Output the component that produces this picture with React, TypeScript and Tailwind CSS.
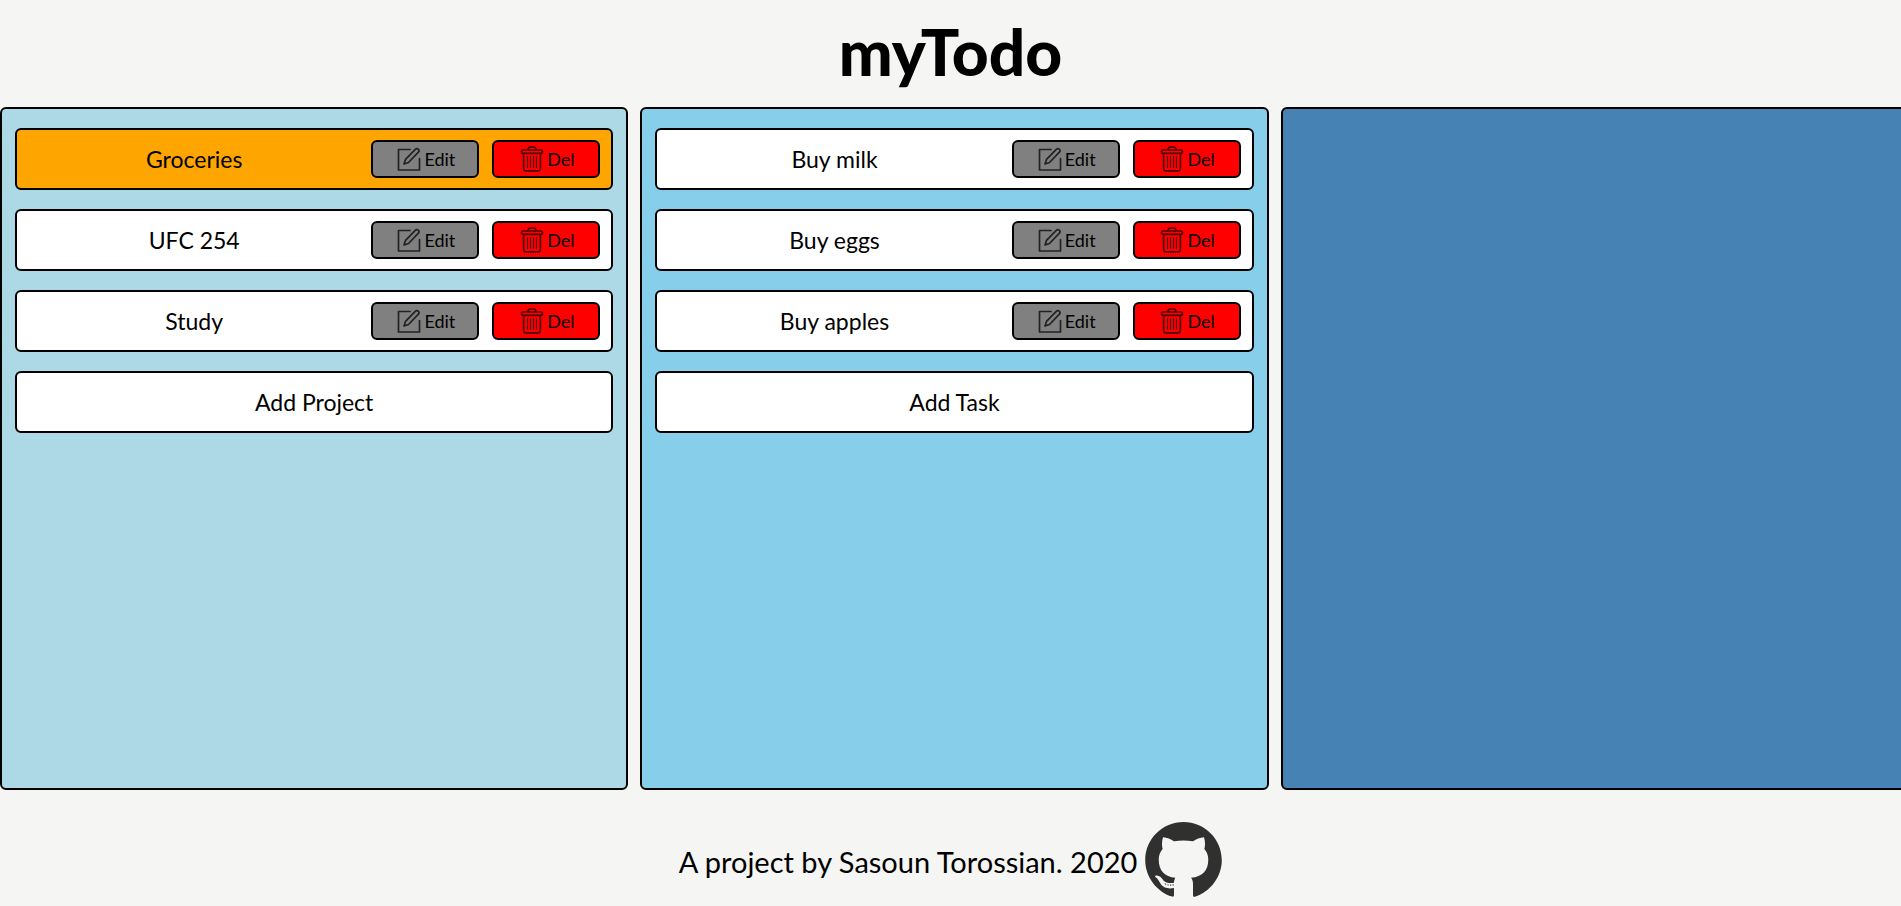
import React, { useState } from "react";

type Item = { id: number; name: string };

const projects: Item[] = [
  { id: 1, name: "Groceries" },
  { id: 2, name: "UFC 254" },
  { id: 3, name: "Study" },
];

const tasks: Item[] = [
  { id: 1, name: "Buy milk" },
  { id: 2, name: "Buy eggs" },
  { id: 3, name: "Buy apples" },
];

function EditIcon() {
  return (
    <svg
      viewBox="0 0 24 24"
      className="size-6 shrink-0"
      fill="none"
      stroke="#222222"
      strokeWidth="1.7"
      strokeLinejoin="round"
      strokeLinecap="round"
      aria-hidden="true"
    >
      <path d="M13 2.5H1.5V23h21V11.5" />
      <path d="M7 17l1.500-4.600L18.300 2.300c.9-.9 2.300-.9 3.100 0 .8.8.8 2 0 2.900L11.500 15.500z" />
    </svg>
  );
}

function TrashIcon() {
  return (
    <svg
      viewBox="0 0 24 26"
      className="h-[26px] w-6 shrink-0"
      fill="none"
      stroke="#4a0000"
      strokeWidth="1.6"
      strokeLinejoin="round"
      strokeLinecap="round"
      aria-hidden="true"
    >
      <rect x="1.5" y="4" width="21" height="3.4" rx="1.7" />
      <path d="M8 4c0-2 1-3 2.4-3h3.200C15 1 16 2 16 4" />
      <path d="M3.600 7.600v14.600c0 1.700 1 2.700 2.700 2.700h11.400c1.700 0 2.700-1 2.700-2.700V7.600" />
      <path d="M7.500 10.500v11M10.500 10.500v11M13.500 10.500v11M16.500 10.500v11" strokeWidth="1.200" />
    </svg>
  );
}

function GithubMark() {
  return (
    <svg viewBox="0 0 98 96" className="h-[75px] w-[77px]" aria-hidden="true">
      <path
        fill="#303030"
        d="M49 0C22 0 0 21.800 0 48.800 0 70 14.500 89 34.500 95.500c1.500.4 2.300-.2 2.300-1.700V84.500c-7 1.200-13.100.2-16.300-4.100-3-4.600-4-8-7.100-9.700-1.300-.8-.8-2.500 1-2.300 5.600.3 7.200 4.500 10 7.400 3.200 2.600 8 2.600 12.400 2 .1-2.500.6-4.300 1.700-6.400C25 70 17.300 62.500 17.300 48c0-5.500 1.800-9.800 5-13.500-1.300-4.300-1.100-10.300.5-15 5.200.2 9.700 2.300 14 5.200 8-1.300 16.400-1.300 24.400 0 4.300-2.900 8.800-5 14-5.200 1.600 4.700 1.800 10.700.5 15 3.200 3.700 5 8 5 13.500 0 14.500-7.700 22-21.900 23.500 1.700 2.400 2.400 5.200 2.400 8.500v14c0 1.500.8 2.100 2.300 1.700C83.500 89 98 70 98 48.800 98 21.800 76 0 49 0z"
      />
      <path
        d="M25.500 78.500l1 2M29 79.500l.5 2M32.500 79.800v2M35.700 79.500v2"
        stroke="#707070"
        strokeWidth="1.500"
      />
    </svg>
  );
}

function ItemRow({
  item,
  active,
  onSelect,
}: {
  item: Item;
  active?: boolean;
  onSelect?: () => void;
}) {
  return (
    <li
      className={`flex h-[62px] items-center rounded-md border-2 border-black pr-[11px] ${
        active ? "bg-[#ffa500]" : "bg-white"
      }`}
    >
      <button type="button" onClick={onSelect} className="h-full flex-1 text-[23px]">
        {item.name}
      </button>
      <div className="flex gap-[13px]">
        <button
          type="button"
          className="flex h-[38px] w-[108px] items-center justify-center gap-[3px] rounded-md border-2 border-black bg-[#808080] pl-[2px] text-lg"
        >
          <EditIcon />
          Edit
        </button>
        <button
          type="button"
          className="flex h-[38px] w-[108px] items-center justify-center gap-[3px] rounded-md border-2 border-black bg-[#ff0000] pl-[2px] text-lg"
        >
          <TrashIcon />
          Del
        </button>
      </div>
    </li>
  );
}

function AddButton({ label }: { label: string }) {
  return (
    <li>
      <button
        type="button"
        className="h-[62px] w-full rounded-md border-2 border-black bg-white text-[23px]"
      >
        {label}
      </button>
    </li>
  );
}

export default function App() {
  const [selected, setSelected] = useState(1);

  return (
    <div className="flex min-h-screen flex-col overflow-x-hidden bg-[#f5f5f3] font-['Gill_Sans_MT','Gill_Sans',Lato,sans-serif] text-black">
      <header className="flex h-[107px] items-center justify-center pb-1">
        <h1 className="text-[64px] font-black">myTodo</h1>
      </header>

      <main className="flex flex-1 gap-3">
        <section
          aria-label="Projects"
          className="w-[calc(33%+1px)] shrink-0 rounded-md border-2 border-black bg-[#add8e6] px-[13px] py-[19px]"
        >
          <ul className="flex flex-col gap-[19px]">
            {projects.map((p) => (
              <ItemRow
                key={p.id}
                item={p}
                active={p.id === selected}
                onSelect={() => setSelected(p.id)}
              />
            ))}
            <AddButton label="Add Project" />
          </ul>
        </section>
        <section
          aria-label="Tasks"
          className="w-[calc(33%+1px)] shrink-0 rounded-md border-2 border-black bg-[#87ceeb] px-[13px] py-[19px]"
        >
          <ul className="flex flex-col gap-[19px]">
            {tasks.map((t) => (
              <ItemRow key={t.id} item={t} />
            ))}
            <AddButton label="Add Task" />
          </ul>
        </section>
        <section
          aria-label="Task details"
          className="w-[calc(33%+1px)] shrink-0 rounded-md border-2 border-black bg-[#4682b4]"
        />
      </main>

      <footer className="flex h-[116px] items-center justify-center gap-2 pt-7">
        <p className="text-[29px]">A project by Sasoun Torossian. 2020</p>
        <a href="#github" aria-label="GitHub" className="mb-1.5">
          <GithubMark />
        </a>
      </footer>
    </div>
  );
}
